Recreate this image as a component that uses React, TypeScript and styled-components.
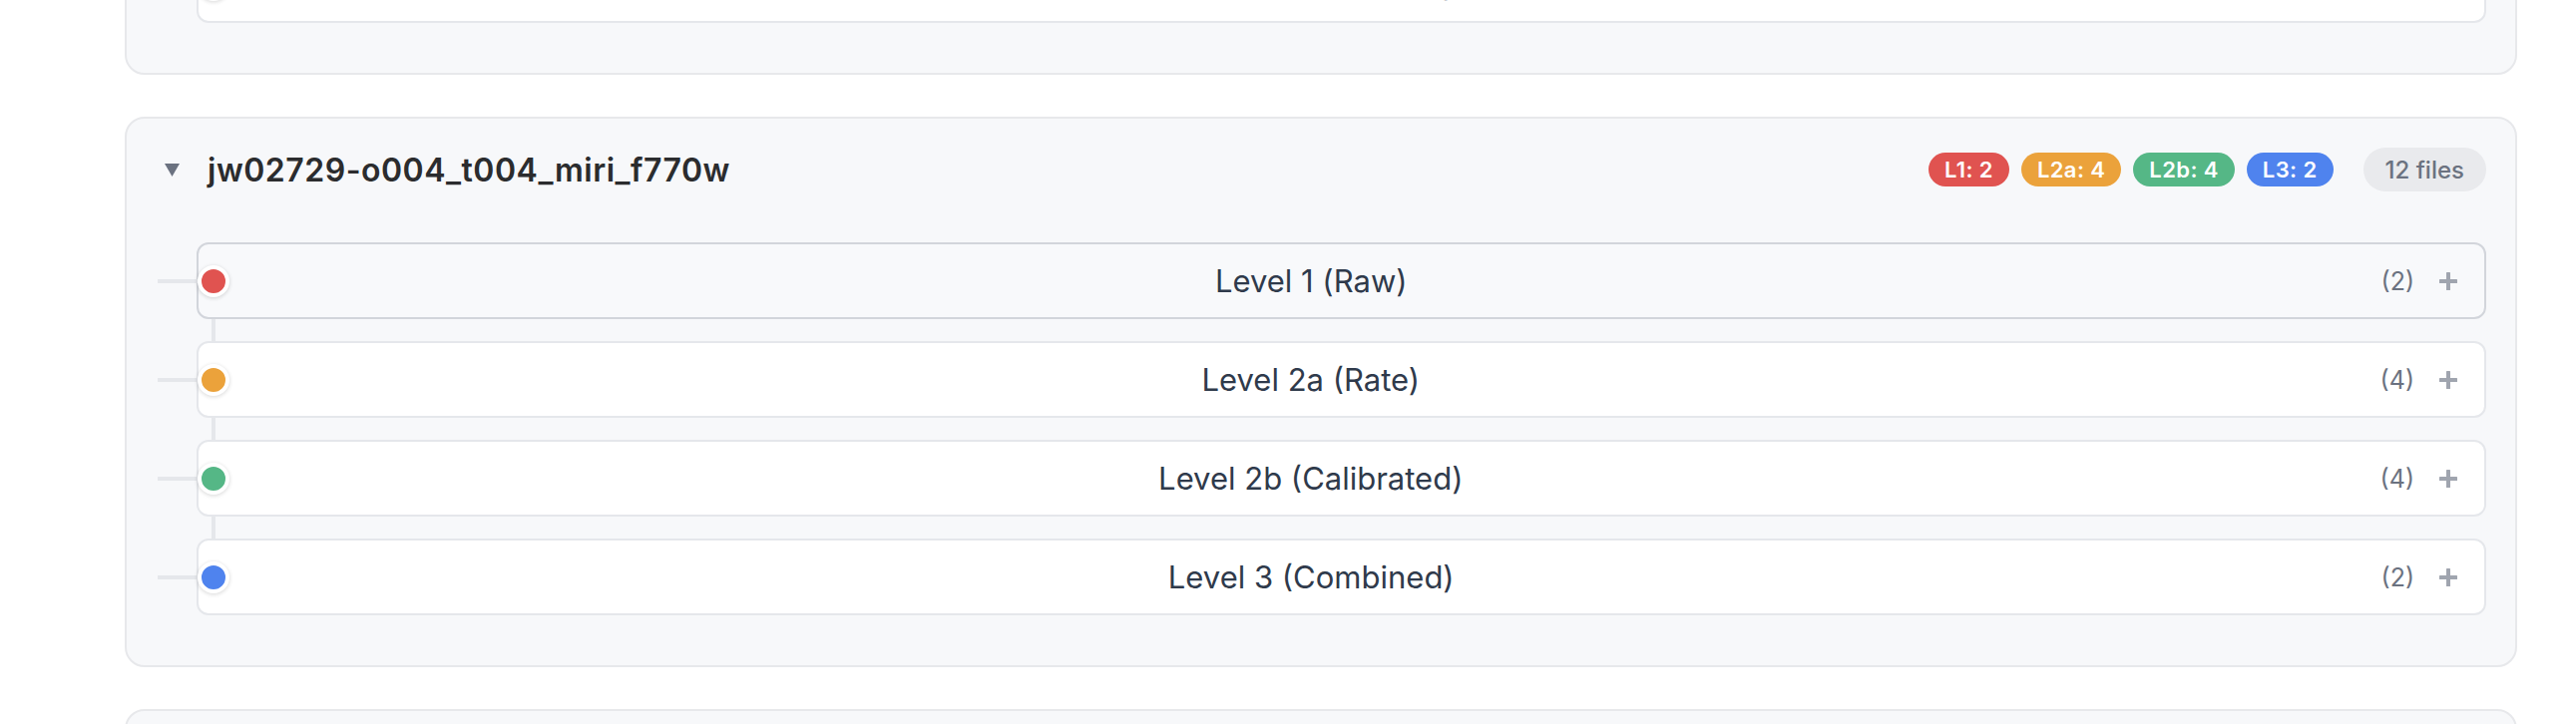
import React from 'react'
import styled, { createGlobalStyle } from 'styled-components'

const GlobalStyle = createGlobalStyle`
  html, body {
    margin: 0;
    padding: 0;
    background: #ffffff;
    overflow: hidden;
  }
  body {
    font-family: Inter, "Noto Sans", "Liberation Sans", sans-serif;
    -webkit-font-smoothing: antialiased;
  }
`

type LevelKey = 'l1' | 'l2a' | 'l2b' | 'l3'

const levelColors: Record<LevelKey, string> = {
  l1: '#e05350',
  l2a: '#eba23b',
  l2b: '#55b786',
  l3: '#4f83ee',
}

interface Level {
  key: LevelKey
  badge: string
  label: string
  count: number
}

interface Observation {
  id: string
  levels: Level[]
}

const makeLevels = (counts: [number, number, number, number]): Level[] => [
  { key: 'l1', badge: 'L1', label: 'Level 1 (Raw)', count: counts[0] },
  { key: 'l2a', badge: 'L2a', label: 'Level 2a (Rate)', count: counts[1] },
  { key: 'l2b', badge: 'L2b', label: 'Level 2b (Calibrated)', count: counts[2] },
  { key: 'l3', badge: 'L3', label: 'Level 3 (Combined)', count: counts[3] },
]

const observations: Observation[] = [
  { id: 'jw02729-o004_t003_miri_f560w', levels: makeLevels([2, 4, 4, 2]) },
  { id: 'jw02729-o004_t004_miri_f770w', levels: makeLevels([2, 4, 4, 2]) },
  { id: 'jw02729-o004_t005_miri_f1000w', levels: makeLevels([2, 4, 4, 2]) },
]

const Page = styled.div`
  display: flex;
  flex-direction: column;
  gap: 42px;
  padding: 0 59px 0 125px;
`

const Card = styled.section<{ $offset?: number }>`
  box-sizing: border-box;
  background: #f7f8fa;
  border: 2px solid #e7e8eb;
  border-radius: 20px;
  padding: 29px 29px 50px 38px;
  margin-top: ${({ $offset }) => ($offset ? `${$offset}px` : '0')};
`

const Header = styled.div`
  display: flex;
  align-items: center;
  height: 44px;
  margin-bottom: 51px;
`

const Caret = styled.svg`
  flex: none;
  width: 15px;
  height: 15px;
  fill: #6b7280;
`

const Title = styled.h2`
  flex: 1;
  margin: 0 0 0 28px;
  font-size: 32px;
  font-weight: 600;
  color: #2b2c2e;
  letter-spacing: 0.5px;
`

const Badges = styled.div`
  display: flex;
  align-items: center;
  gap: 12px;
`

const Badge = styled.span<{ $color: string }>`
  display: inline-flex;
  align-items: center;
  height: 34px;
  padding: 0 16px;
  border-radius: 17px;
  background: ${({ $color }) => $color};
  color: #ffffff;
  font-size: 22px;
  font-weight: 600;
  letter-spacing: 0.4px;
`

const FilesPill = styled.span`
  display: inline-flex;
  align-items: center;
  height: 44px;
  padding: 0 22px;
  margin-left: 30px;
  border-radius: 22px;
  background: #e9eaed;
  color: #6b7280;
  font-size: 24px;
  font-weight: 500;
`

const LevelList = styled.div`
  display: flex;
  flex-direction: column;
  gap: 22px;
  margin-left: 32px;
`

const Row = styled.div<{ $active?: boolean; $last?: boolean }>`
  position: relative;
  box-sizing: border-box;
  display: flex;
  align-items: center;
  height: 77px;
  padding: 0 26px 0 43px;
  background: ${({ $active }) => ($active ? '#f8f9fb' : '#ffffff')};
  border: 2px solid ${({ $active }) => ($active ? '#d2d5db' : '#e5e7eb')};
  border-radius: 12px;

  &::before {
    content: '';
    position: absolute;
    left: -41px;
    top: 50%;
    width: 44px;
    height: 4px;
    margin-top: -2px;
    background: #e5e7eb;
  }

  &::after {
    content: '';
    display: ${({ $last }) => ($last ? 'none' : 'block')};
    position: absolute;
    left: 13px;
    top: calc(100% + 2px);
    width: 4px;
    height: 22px;
    background: #e5e7eb;
  }
`

const Dot = styled.span<{ $color: string }>`
  position: absolute;
  left: -1px;
  top: 50%;
  box-sizing: border-box;
  width: 32px;
  height: 32px;
  margin-top: -16px;
  border-radius: 50%;
  border: 4px solid #ffffff;
  background: ${({ $color }) => $color};
  box-shadow: 0 1px 4px rgba(0, 0, 0, 0.16);
  z-index: 1;
`

const Label = styled.span`
  flex: 1;
  text-align: center;
  font-size: 31px;
  font-weight: 400;
  color: #2f3a4b;
`

const Count = styled.span`
  font-size: 25px;
  color: #6b7280;
`

const AddButton = styled.button`
  display: flex;
  align-items: center;
  justify-content: center;
  width: 20px;
  height: 20px;
  margin-left: 24px;
  padding: 0;
  border: none;
  background: none;
  cursor: pointer;
  color: #a0a5af;
`

function PlusIcon() {
  return (
    <svg width="20" height="20" viewBox="0 0 20 20" fill="currentColor">
      <rect x="8" y="1" width="4" height="18" rx="0.5" />
      <rect x="1" y="8" width="18" height="4" rx="0.5" />
    </svg>
  )
}

function ObservationCard({ obs, offset }: { obs: Observation; offset?: number }) {
  const total = obs.levels.reduce((sum, l) => sum + l.count, 0)
  return (
    <Card $offset={offset}>
      <Header>
        <Caret viewBox="0 0 15 15">
          <polygon points="0,1 15,1 7.5,14" />
        </Caret>
        <Title>{obs.id}</Title>
        <Badges>
          {obs.levels.map((level) => (
            <Badge key={level.key} $color={levelColors[level.key]}>
              {level.badge}: {level.count}
            </Badge>
          ))}
        </Badges>
        <FilesPill>{total} files</FilesPill>
      </Header>
      <LevelList>
        {obs.levels.map((level, i) => (
          <Row key={level.key} $active={i === 0 && offset === undefined} $last={i === obs.levels.length - 1}>
            <Dot $color={levelColors[level.key]} />
            <Label>{level.label}</Label>
            <Count>({level.count})</Count>
            <AddButton aria-label={`Add ${level.label}`}>
              <PlusIcon />
            </AddButton>
          </Row>
        ))}
      </LevelList>
    </Card>
  )
}

export default function App() {
  return (
    <>
      <GlobalStyle />
      <Page>
        {observations.map((obs, i) => (
          <ObservationCard key={obs.id} obs={obs} offset={i === 0 ? -477 : undefined} />
        ))}
      </Page>
    </>
  )
}
